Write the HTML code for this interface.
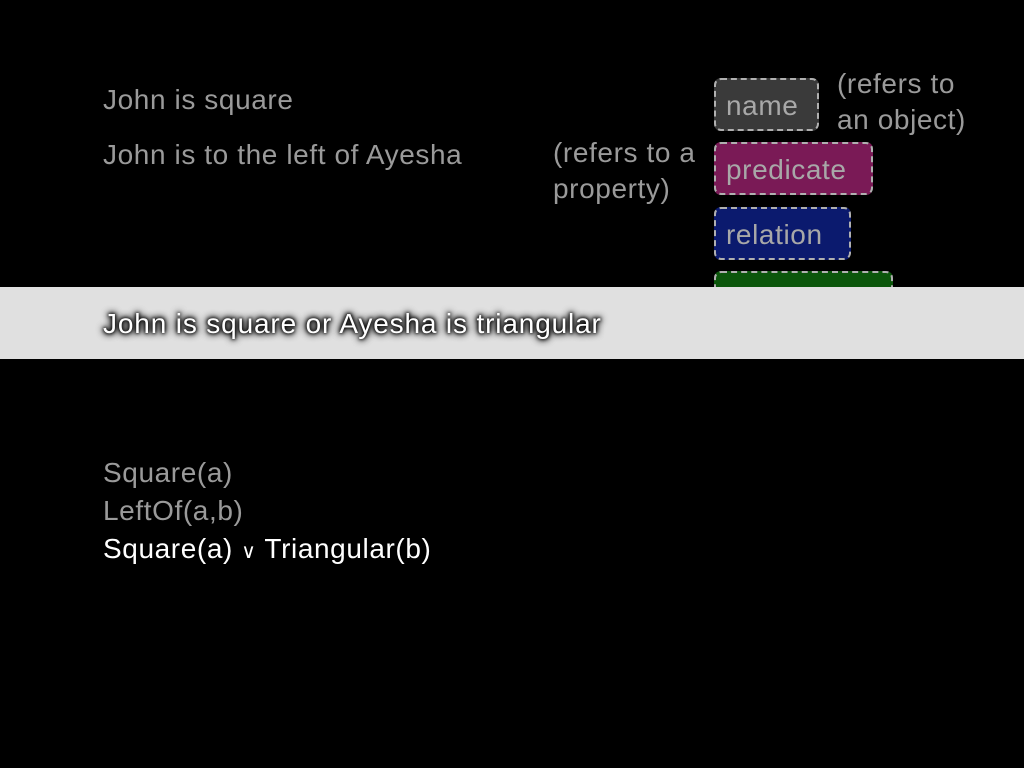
<!DOCTYPE html>
<html><head><style>
body{margin:0;width:1024px;height:768px;background:#000;position:relative;overflow:hidden;font-family:"Liberation Sans",sans-serif;}
.t{position:absolute;font-size:28px;letter-spacing:0.6px;color:#9a9a9a;white-space:nowrap;line-height:1}
.b{position:absolute;border:2px dashed #b0b0b0;border-radius:7px;box-sizing:border-box;color:#a8a8a8;font-size:28px;letter-spacing:0.6px;padding-left:10px;line-height:52px}
.band{position:absolute;left:0;top:287px;width:1024px;height:72px;background:#e0e0e0}
</style></head><body>
<div class="t" style="left:103px;top:86px">John is square</div>
<div class="t" style="left:103px;top:141px">John is to the left of Ayesha</div>
<div class="t" style="left:553px;top:135px;line-height:36px">(refers to a<br>property)</div>
<div class="t" style="left:837px;top:66px;line-height:36px">(refers to<br>an object)</div>
<div class="b" style="left:714px;top:78px;width:105px;height:53px;background:#3a3a3a">name</div>
<div class="b" style="left:714px;top:142px;width:159px;height:53px;background:#7a1a56">predicate</div>
<div class="b" style="left:714px;top:207px;width:137px;height:53px;background:#0b1a6e">relation</div>
<div class="b" style="left:714px;top:271px;width:179px;height:53px;background:#0b560b"></div>
<div class="band"></div>
<div class="t" style="left:103px;top:310px;letter-spacing:0.85px;color:#fff;text-shadow:0 0 3px #000,0 0 5px #000,0 0 8px #000,0 0 8px #000">John is square or Ayesha is triangular</div>
<div class="t" style="left:103px;top:459px">Square(a)</div>
<div class="t" style="left:103px;top:497px">LeftOf(a,b)</div>
<div class="t" style="left:103px;top:535px;color:#fff">Square(a) <span style="font-size:20px">∨</span> Triangular(b)</div>
</body></html>
